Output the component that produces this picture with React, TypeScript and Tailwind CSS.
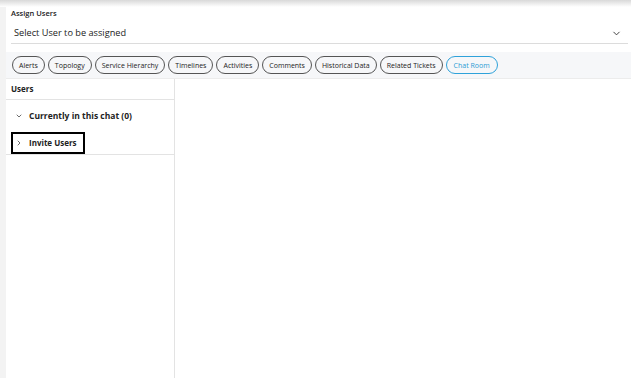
import { ChevronDown, ChevronRight } from "lucide-react";

const tabs = [
  "Alerts",
  "Topology",
  "Service Hierarchy",
  "Timelines",
  "Activities",
  "Comments",
  "Historical Data",
  "Related Tickets",
];

export default function App() {
  return (
    <main className="flex h-[378px] w-[631px] flex-col overflow-hidden bg-white font-['Open_Sans',sans-serif] text-[#222]">
      <div className="h-[7px] shrink-0 bg-gradient-to-b from-[#d9d9d9] to-white" />
      <div className="flex min-h-0 grow">
        <div className="w-[6px] shrink-0 bg-[#f3f3f3]" />
        <section className="flex min-w-0 grow flex-col">
          <div className="pl-[5px] pr-[3px]">
            <h1 className="text-[7.5px] leading-[12px] font-semibold">Assign Users</h1>
            <div className="mt-[4px] flex h-[21px] items-center border-b border-[#dcdcdc] pl-[3px] pr-[6px]">
              <span className="text-[9.2px] leading-none">Select User to be assigned</span>
              <ChevronDown className="ml-auto h-[11px] w-[11px] text-[#333]" strokeWidth={2} />
            </div>
          </div>
          <nav className="mt-[8px] flex h-[27px] items-center gap-[3px] border-b border-[#ececec] bg-[#f6f7f9] pl-[6px]">
            {tabs.map((t) => (
              <span
                key={t}
                className="flex h-[18px] items-center rounded-full border border-[#555] px-[6px] text-[7px] leading-none"
              >
                {t}
              </span>
            ))}
            <span className="flex h-[18px] items-center rounded-full border border-[#2fa2da] px-[7px] text-[7px] leading-none text-[#2b9cd4]">
              Chat Room
            </span>
          </nav>
          <div className="flex min-h-0 grow">
            <aside className="w-[169px] shrink-0 border-r border-[#e3e3e3]">
              <h2 className="flex h-[21px] items-center border-b border-[#e3e3e3] pl-[5px] text-[8px] font-bold">
                Users
              </h2>
              <div className="flex h-[32px] items-center gap-[6px] pl-[9px] text-[8.5px] font-bold">
                <ChevronDown className="h-[8px] w-[8px]" strokeWidth={2} />
                Currently in this chat (0)
              </div>
              <div className="border-b border-[#e3e3e3] pl-[5px]">
                <div className="flex h-[22px] w-[74px] items-center gap-[6px] border-2 border-black pl-[2px] text-[8px] font-bold">
                  <ChevronRight className="h-[8px] w-[8px]" strokeWidth={2} />
                  Invite Users
                </div>
              </div>
            </aside>
            <div className="grow" />
          </div>
        </section>
      </div>
    </main>
  );
}
